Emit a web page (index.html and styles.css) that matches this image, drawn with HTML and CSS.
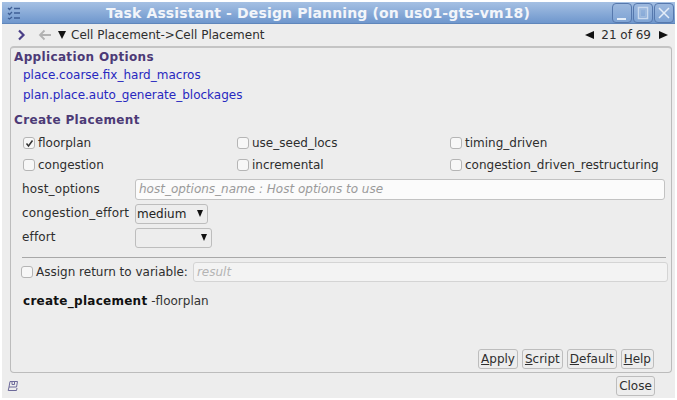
FILE: index.html
```html
<!DOCTYPE html>
<html lang="en">
<head>
<meta charset="utf-8">
<title>Task Assistant</title>
<link rel="stylesheet" href="styles.css">
</head>
<body>
<div class="window">
  <header class="titlebar">
    <svg class="app-icon" width="14" height="14" viewBox="0 0 14 14"><path d="M1 2l1.500 1.500L5 1M1 7l1.500 1.500L5 6M1 12l1.500 1L5 11M7 2.500h6M7 7h6M7 12h6" fill="none" stroke="#3f5f96" stroke-width="1.300"/></svg>
    <div class="title">Task Assistant - Design Planning (on us01-gts-vm18)</div>
    <div class="win-btns">
      <span class="win-btn"><svg width="16" height="20" viewBox="0 0 16 20"><path d="M3 15h9" stroke="#e4edf8" stroke-width="2"/></svg></span>
      <span class="win-btn"><svg width="16" height="20" viewBox="0 0 16 20"><rect x="3.500" y="3.500" width="9" height="11" fill="none" stroke="#c9d9ee" stroke-width="1.500"/><rect x="5.500" y="5.500" width="5" height="7" fill="none" stroke="#9db9dd"/></svg></span>
      <span class="win-btn"><svg width="16" height="20" viewBox="0 0 16 20"><path d="M3 4l10 10M13 4L3 14" stroke="#e4edf8" stroke-width="1.500"/></svg></span>
    </div>
  </header>
  <nav class="navbar">
    <svg class="nav-chevron" width="9" height="12" viewBox="0 0 9 12"><path d="M2 1.500L6.500 6 2 10.500" fill="none" stroke="#4a3f87" stroke-width="2.200"/></svg>
    <svg class="nav-back" width="14" height="12" viewBox="0 0 14 12"><path d="M13 6H2M6.500 1.500L2 6l4.500 4.500" fill="none" stroke="#b2b2b2" stroke-width="1.800"/></svg>
    <span class="tri-down"></span>
    <span class="crumb">Cell Placement-&gt;Cell Placement</span>
    <span class="pager"><span class="tri-left"></span><span>21 of 69</span><span class="tri-right"></span></span>
  </nav>
  <main class="panel">
    <h2 class="section first">Application Options</h2>
    <a class="link">place.coarse.fix_hard_macros</a>
    <a class="link">plan.place.auto_generate_blockages</a>
    <h2 class="section second">Create Placement</h2>
    <div class="check-grid">
      <label class="check"><span class="box checked"><svg width="9" height="9" viewBox="0 0 9 9"><path d="M1.500 4.500l2 2.500 4-5.500" fill="none" stroke="#333" stroke-width="1.500"/></svg></span>floorplan</label>
      <label class="check"><span class="box"></span>use_seed_locs</label>
      <label class="check"><span class="box"></span>timing_driven</label>
      <label class="check"><span class="box"></span>congestion</label>
      <label class="check"><span class="box"></span>incremental</label>
      <label class="check"><span class="box"></span>congestion_driven_restructuring</label>
    </div>
    <div class="form">
      <span class="field-label">host_options</span>
      <div class="input wide">host_options_name : Host options to use</div>
      <span class="field-label">congestion_effort</span>
      <div class="select s-medium">medium<span class="tri-down small"></span></div>
      <span class="field-label">effort</span>
      <div class="select s-empty"><span class="tri-down small"></span></div>
    </div>
    <hr class="rule">
    <div class="assign">
      <label class="check"><span class="box"></span>Assign return to variable:</label>
      <div class="input result">result</div>
    </div>
    <p class="command"><b>create_placement</b> -floorplan</p>
    <div class="actions">
      <button class="btn"><u>A</u>pply</button>
      <button class="btn"><u>S</u>cript</button>
      <button class="btn"><u>D</u>efault</button>
      <button class="btn"><u>H</u>elp</button>
    </div>
  </main>
  <footer class="footer">
    <svg width="12" height="12" viewBox="0 0 12 12"><path d="M3 1.500h7.500L9.500 7H2L3 1.500zM2 7l-.8 3.500h8.300L10 8M5 2v2.500h2.500V2" fill="none" stroke="#6d6a9a" stroke-width="1"/></svg>
    <button class="btn close">Close</button>
  </footer>
</div>
</body>
</html>
```
FILE: styles.css
```css
* { box-sizing: border-box; }
html, body { margin: 0; height: 100%; background: #fff; }
body { padding: 2px; font-family: "DejaVu Sans", sans-serif; font-size: 12px; color: #2e2e2e; overflow: hidden; }
.window { height: 396px; background: #ededed; display: flex; flex-direction: column; }
.titlebar { height: 22px; flex: none; display: flex; align-items: center; background: linear-gradient(#a5c0e3, #6f97cd); border-bottom: 1px solid #5f86bb; position: relative; }
.app-icon { margin-left: 5px; flex: none; }
.title { position: absolute; left: 104px; top: 2px; font-weight: bold; font-size: 14px; line-height: 18px; letter-spacing: 0.14px; color: #f2f5fa; white-space: nowrap; }
.win-btns { margin-left: auto; margin-right: 1px; display: flex; gap: 1px; }
.win-btn { width: 20px; height: 20px; border: 1px solid #5678ad; border-radius: 4px; background: linear-gradient(#9cb8de, #7ea3d4); display: flex; justify-content: center; overflow: hidden; }
.navbar { height: 22px; flex: none; display: flex; align-items: center; padding: 0 7px 0 15px; }
.nav-back { margin-left: 12px; }
.tri-down { display: inline-block; border-left: 4px solid transparent; border-right: 4px solid transparent; border-top: 8px solid #111; margin-left: 6px; }
.crumb { margin-left: 5px; }
.pager { margin-left: auto; display: flex; align-items: center; gap: 6px; }
.tri-left { border-top: 4.500px solid transparent; border-bottom: 4.500px solid transparent; border-right: 9px solid #111; margin-right: 1px; }
.tri-right { border-top: 4.500px solid transparent; border-bottom: 4.500px solid transparent; border-left: 9px solid #111; margin-left: 2px; }
.panel { height: 327px; flex: none; margin: 0 3px 0 8px; border: 1px solid #bcbcbc; border-top: 2px solid #c4c4c4; border-radius: 4px; position: relative; padding: 0 0 0 3px; display: flex; flex-direction: column; }
.section { margin: 0; font-size: 12px; font-weight: bold; letter-spacing: 0.35px; color: #4c3a76; line-height: 16px; }
.section.first { margin-top: 1px; }
.section.second { margin-top: 7px; }
.link { display: block; color: #2828c0; line-height: 20px; margin-left: 9px; }
.check-grid { display: grid; grid-template-columns: 214px 213px auto; margin: 4px 0 0 9px; }
.check { display: flex; align-items: center; height: 22px; white-space: nowrap; }
.box { width: 12px; height: 12px; border: 1px solid #b5b5b5; border-radius: 3px; background: #f7f7f7; margin-right: 3px; display: flex; align-items: center; justify-content: center; flex: none; }
.form { display: grid; grid-template-columns: 113px 1fr; align-items: center; row-gap: 3px; margin: 3px 0 0 8px; }
.field-label { line-height: 21px; letter-spacing: 0.15px; }
.input { height: 21px; border: 1px solid #c2c2c2; border-radius: 3px; background: #f6f6f6; color: #9a9a9a; font-style: italic; padding: 0 3px; line-height: 19px; }
.wide { margin-right: 6px; background: #fbfbfb; }
.select { height: 20px; border: 1px solid #bdbdbd; border-radius: 3px; display: flex; align-items: center; padding: 0 3px 0 1px; color: #222; }
.s-medium { width: 73px; }
.s-empty { width: 77px; }
.tri-down.small { border-left-width: 3.500px; border-right-width: 3.500px; border-top-width: 7px; margin: 0 1px 0 auto; }
.rule { border: 0; border-top: 1px solid #a8a8a8; margin: 9px 0 0 8px; width: 644px; height: 0; }
.assign { display: flex; align-items: center; margin: 3px 0 0 7px; }
.result { margin-left: 5px; width: 475px; height: 20px; background: #f3f3f3; color: #b4b4b4; border-color: #d4d4d4; }
.command { margin: 11px 0 0 9px; color: #333; }
.command b { color: #111; letter-spacing: 0.27px; }
.actions { position: absolute; right: 17px; bottom: 3px; display: flex; gap: 4px; }
.btn { height: 20px; padding: 0 2px; font: 12px "DejaVu Sans", sans-serif; color: #2e2e2e; background: #ededed; border: 1px solid #bdbdbd; border-radius: 3px; }
.footer { flex: 1; display: flex; align-items: center; justify-content: space-between; padding: 0 20px 0 5px; }
.close { width: 39px; }
```
